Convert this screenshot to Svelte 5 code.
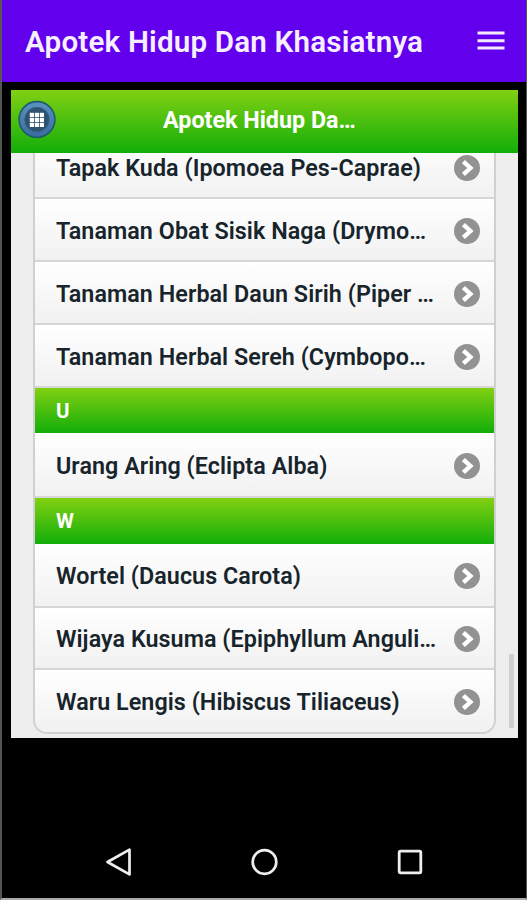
<script>
  const groups = [
    { items: ['Tapak Kuda (Ipomoea Pes-Caprae)', 'Tanaman Obat Sisik Naga (Drymo…', 'Tanaman Herbal Daun Sirih (Piper …', 'Tanaman Herbal Sereh (Cymbopo…'] },
    { letter: 'U', items: ['Urang Aring (Eclipta Alba)'] },
    { letter: 'W', items: ['Wortel (Daucus Carota)', 'Wijaya Kusuma (Epiphyllum Anguli…', 'Waru Lengis (Hibiscus Tiliaceus)'] }
  ];
  const dots = [0, 1, 2].flatMap((r) => [0, 1, 2].map((c) => [c, r]));
</script>

<div class="screen">
  <header class="appbar">
    <h1>Apotek Hidup Dan Khasiatnya</h1>
    <svg class="menu" width="28" height="20" viewBox="0 0 28 20"><path d="M0.5 2h27M0.5 9.7h27M0.5 17.1h27" stroke="#f3eaff" stroke-width="3" /></svg>
  </header>

  <main class="panel">
    <div class="head">
      <svg class="grid" width="40" height="40" viewBox="0 0 40 40">
        <defs>
          <linearGradient id="ring" x1="0" y1="0" x2="0" y2="1">
            <stop offset="0" stop-color="#5a93c2" />
            <stop offset="1" stop-color="#396b9e" />
          </linearGradient>
        </defs>
        <circle cx="20" cy="19.5" r="17.9" fill="url(#ring)" stroke="#1d5c6c" stroke-width="1.6" />
        <circle cx="20" cy="19.5" r="12.2" fill="#2e526f" stroke="#346083" stroke-width="1" />
        {#each dots as [c, r]}
          <rect x={12.8 + c * 5} y={12.8 + r * 5} width="4.2" height="4.2" rx="0.5" fill="#fff" />
        {/each}
      </svg>
      <h2>Apotek Hidup Da…</h2>
    </div>
    <div class="scroll">
      <div class="list">
        {#each groups as g}
          {#if g.letter}<div class="divider">{g.letter}</div>{/if}
          {#each g.items as item}
            <div class="row">
              <span>{item}</span>
              <svg width="26" height="26" viewBox="0 0 26 26">
                <circle cx="13" cy="13" r="13" fill="#929292" />
                <path d="M9.4 6.6L16.4 13L9.4 19.4" fill="none" stroke="#fff" stroke-width="4.4" />
              </svg>
            </div>
          {/each}
        {/each}
      </div>
      <div class="thumb"></div>
    </div>
  </main>

  <nav>
    <svg width="26" height="28" viewBox="0 0 26 28"><path d="M1.5 14L23.5 1.6V26.4Z" fill="none" stroke="#eee" stroke-width="2.7" stroke-linejoin="round" /></svg>
    <svg width="28" height="28" viewBox="0 0 28 28"><circle cx="13.5" cy="14" r="11.8" fill="none" stroke="#eee" stroke-width="2.7" /></svg>
    <svg width="26" height="26" viewBox="0 0 26 26"><rect x="2.2" y="2.2" width="21.6" height="21.6" rx="1.2" fill="none" stroke="#eee" stroke-width="2.8" /></svg>
  </nav>
</div>

<style>
  .screen {
    box-sizing: border-box;
    width: 527px;
    height: 900px;
    background: #000;
    border-left: 2px solid #555;
    border-right: 1px solid #555;
    border-bottom: 2px solid #aaa;
    display: flex;
    flex-direction: column;
    font-family: Roboto, sans-serif;
    overflow: hidden;
  }
  .appbar {
    flex: none;
    height: 82px;
    box-sizing: border-box;
    background: #6200ee;
    display: flex;
    align-items: center;
    justify-content: space-between;
    padding: 2px 21px 0 23px;
  }
  h1 {
    margin: 0;
    color: #f6efff;
    font-size: 29.6px;
    font-weight: 600;
    letter-spacing: 0.18px;
    line-height: 36px;
    white-space: nowrap;
  }
  .menu { margin-top: -3px; }
  .panel {
    flex: none;
    box-sizing: border-box;
    height: 648px;
    margin: 8px 8px 0 9px;
    background: #eee;
    display: flex;
    flex-direction: column;
    overflow: hidden;
  }
  .head {
    flex: none;
    height: 63px;
    background: linear-gradient(#82d012, #12ae0a);
    display: flex;
    align-items: center;
    padding-left: 6px;
  }
  .grid { margin-top: -4px; }
  h2 {
    margin: -3px 0 0 106px;
    color: #fff;
    font-size: 23.3px;
    font-weight: 700;
    line-height: 30px;
    white-space: nowrap;
  }
  .scroll {
    flex: 1;
    overflow: hidden;
    display: flex;
    align-items: flex-end;
    padding: 0 4px 4px 22px;
    justify-content: space-between;
  }
  .list {
    box-sizing: border-box;
    width: 463px;
    border: 2px solid #d0d0d0;
    border-top: 0;
    border-radius: 0 0 14px 14px;
    background: #eee;
    overflow: hidden;
  }
  .row {
    box-sizing: border-box;
    height: 63px;
    border-bottom: 2px solid #d6d6d6;
    background: linear-gradient(#fff, #f1f1f1);
    display: flex;
    align-items: center;
    justify-content: space-between;
    padding: 3px 14px 0 21px;
    color: #17242b;
    font-size: 23.3px;
    font-weight: 580;
    letter-spacing: 0.06px;
    line-height: 30px;
    white-space: nowrap;
  }
  .divider + .row { height: 64.3px; }
  .row:nth-last-child(2) { height: 62.2px; }
  .row:last-child { border-bottom: 0; height: 62px; padding-top: 2px; }
  .divider {
    box-sizing: border-box;
    height: 45.8px;
    margin: 0 -2px;
    padding-left: 23px;
    background: linear-gradient(#82d012, #12ae0a);
    color: #fff;
    font-size: 20.5px;
    font-weight: 700;
    line-height: 46px;
  }
  .thumb {
    width: 5px;
    height: 74px;
    margin-bottom: 6px;
    background: #cfcfcf;
  }
  nav {
    flex: 1;
    display: flex;
    align-items: center;
    justify-content: space-between;
    padding: 88px 103px 0 104px;
  }
</style>
